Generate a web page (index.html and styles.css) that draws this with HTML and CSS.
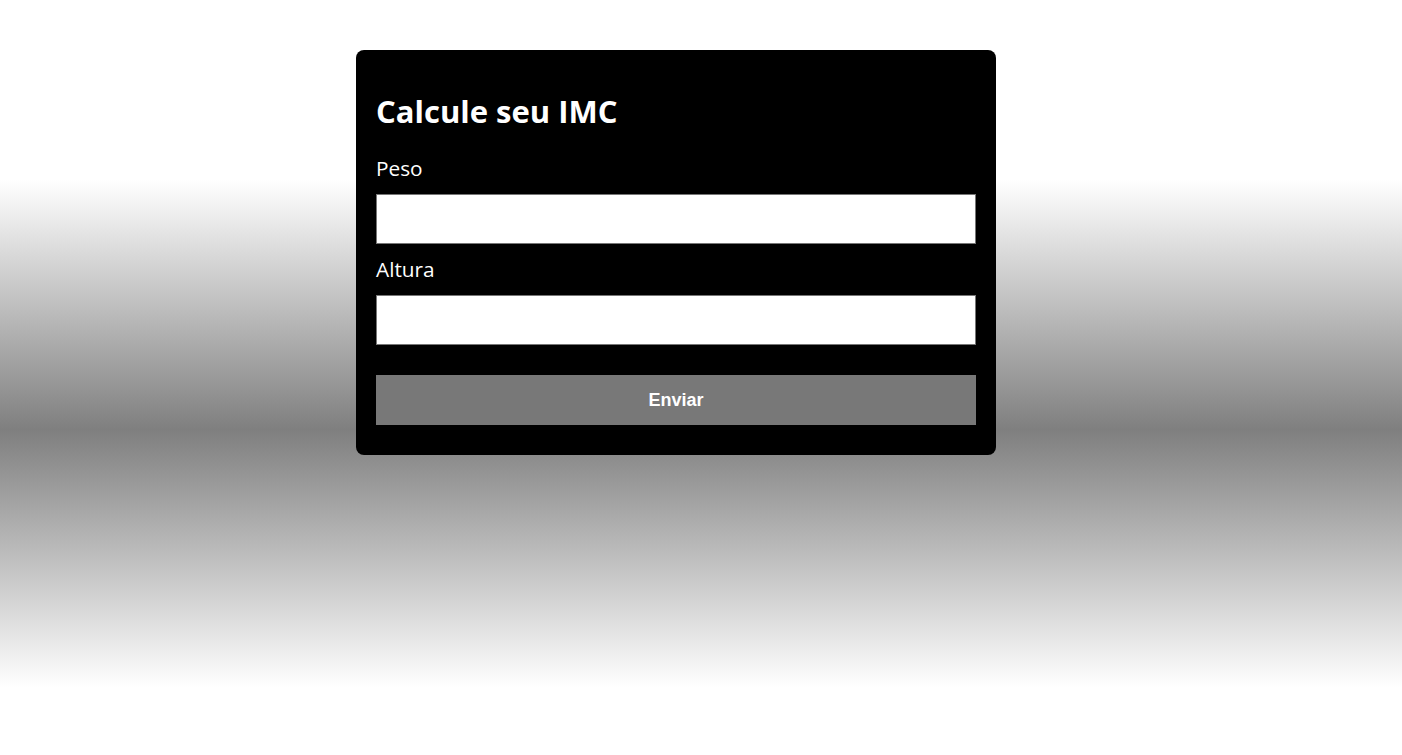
FILE: index.html
```html
<!DOCTYPE html>
<html lang="pt-BR">
<head>
<meta charset="utf-8">
<title>Calcule seu IMC</title>
<link rel="stylesheet" href="styles.css">
</head>
<body>
<form class="card">
  <h1 class="title">Calcule seu IMC</h1>
  <label class="label label-first" for="peso">Peso</label>
  <input class="field" id="peso" type="text">
  <label class="label" for="altura">Altura</label>
  <input class="field" id="altura" type="text">
  <button class="submit" type="button">Enviar</button>
</form>
</body>
</html>
```
FILE: styles.css
```css
html {
  height: 100%;
}
body {
  margin: 0;
  min-height: 755px;
  background: linear-gradient(to bottom, #ffffff 0, #ffffff 180px, #7f7f7f 430px, #ffffff 688px, #ffffff 100%);
  font-family: "Open Sans", "Liberation Sans", sans-serif;
  overflow: hidden;
}
.card {
  box-sizing: border-box;
  width: 640px;
  margin: 50px 0 0 356px;
  padding: 20px 20px 30px;
  background: #000000;
  border-radius: 8px;
  display: flex;
  flex-direction: column;
  color: #ffffff;
}
.title {
  margin: 21px 0 22px;
  font-size: 31px;
  font-weight: 700;
  line-height: 41px;
}
.label {
  font-size: 20.8px;
  line-height: 27px;
  margin: 12px 0 12px;
}
.label-first {
  margin: 1px 0 12px;
}
.field {
  box-sizing: border-box;
  height: 50px;
  width: 100%;
  margin: 0;
  border: 1px solid #767676;
  background: #ffffff;
  padding: 0 10px;
  font-size: 16px;
}
.submit {
  margin-top: 30px;
  height: 50px;
  border: none;
  background: #787878;
  color: #ffffff;
  font-family: "Liberation Sans", Arial, sans-serif;
  font-weight: 700;
  font-size: 18px;
  padding: 0;
}
```
